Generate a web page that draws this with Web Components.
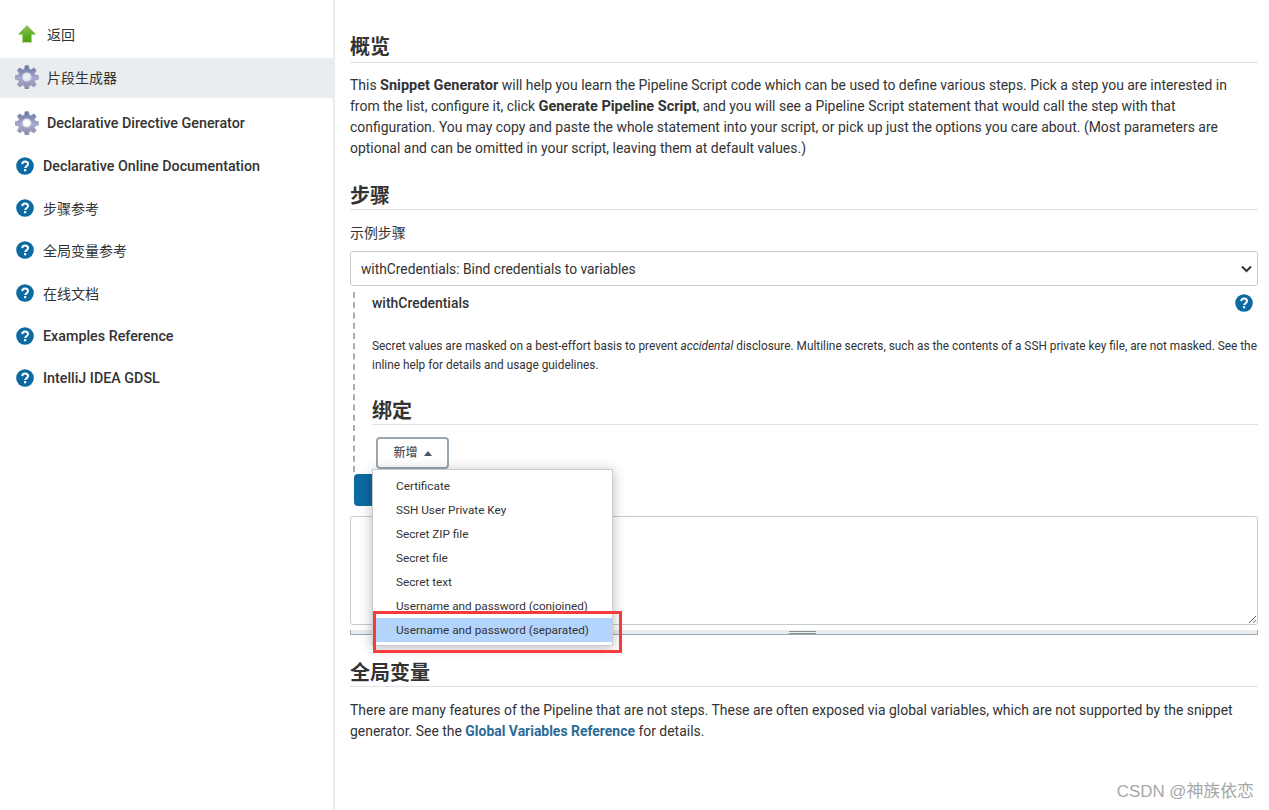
<!DOCTYPE html>
<html lang="zh">
<head>
<meta charset="utf-8">
<title>Snippet Generator</title>
<style>
html, body { margin: 0; height: 100%; background: #fff; overflow: hidden; }
body { font-family: Roboto, "Noto Sans CJK SC", sans-serif; color: #333; }
</style>
</head>
<body>
<snippet-page></snippet-page>

<template id="help-icon-tpl">
  <style>
    :host { display: inline-flex; width: 18px; height: 18px; }
    svg { width: 100%; height: 100%; display: block; }
  </style>
  <svg viewBox="0 0 18 18">
    <circle cx="9" cy="9" r="8.8" fill="#0b6aa2"/>
    <path d="M6.2 7.1C6.3 5.4 7.5 4.4 9.1 4.4c1.7 0 2.9 1 2.9 2.5 0 1.1-.6 1.8-1.6 2.4-.8.5-1.1.9-1.1 1.7" fill="none" stroke="#fff" stroke-width="2"/>
    <rect x="8" y="12.1" width="2.2" height="2.2" fill="#fff"/>
  </svg>
</template>

<script>
class HelpIcon extends HTMLElement {
    constructor() {
        super();
        this.attachShadow({ mode: "open" }).appendChild(document.getElementById("help-icon-tpl").content.cloneNode(true));
    }
}

class GearIcon extends HTMLElement {
    constructor() {
        super();
        this.attachShadow({ mode: "open" }).innerHTML = `
        <style>
        :host { display: inline-flex; width: 24px; height: 24px; }
        svg { width: 100%; height: 100%; display: block; }
        </style>
        <svg viewBox="0 0 24 24">
            <defs>
                <linearGradient id="g" x1="0" y1="0" x2="0" y2="1">
                    <stop offset="0" stop-color="#62769f"/>
                    <stop offset=".55" stop-color="#a9a9cf"/>
                    <stop offset="1" stop-color="#8b8ba6"/>
                </linearGradient>
            </defs>
            <path fill="url(#g)" stroke="#8f95ac" stroke-width=".5" fill-rule="evenodd" d="M10 .6h3.600l.6 3.400 1.900.8 2.800-2 2.500 2.500-2 2.900.8 1.800 3.300.6v3.700l-3.300.6-.8 1.800 2 2.900-2.500 2.500-2.800-2-1.900.8-.6 3.200h-3.600l-.6-3.200-1.900-.8-2.800 2-2.500-2.500 2-2.900-.8-1.800-3.300-.6V10.600l3.300-.6.8-1.800-2-2.900 2.500-2.500 2.800 2 1.900-.8zM11.800 8a4 4 0 1 0 .01 0z"/>
            <circle cx="11.800" cy="12" r="4" fill="none" stroke="#e8e8f4" stroke-width="1.200"/>
        </svg>`;
    }
}

class BackIcon extends HTMLElement {
    constructor() {
        super();
        this.attachShadow({ mode: "open" }).innerHTML = `
        <style>
        :host { display: inline-flex; width: 20px; height: 20px; }
        svg { width: 100%; height: 100%; display: block; }
        </style>
        <svg viewBox="0 0 20 20">
            <defs>
                <linearGradient id="a" x1="0" y1="0" x2="0" y2="1">
                    <stop offset="0" stop-color="#8fc463"/>
                    <stop offset=".6" stop-color="#5fae1f"/>
                    <stop offset="1" stop-color="#4f9e10"/>
                </linearGradient>
            </defs>
            <path fill="url(#a)" d="M10 1 19 10.500H14.500V18H5.500V10.500H1z"/>
            <rect x="5" y="18" width="10" height="1.200" fill="#c8d6bd"/>
        </svg>`;
    }
}

class SideItem extends HTMLElement {
    constructor() {
        super();
        this.attachShadow({ mode: "open" }).innerHTML = `
        <style>
        :host { display: flex; align-items: center; gap: var(--gap, 9px); height: var(--h, 42.5px); box-sizing: border-box; padding-left: var(--pad, 16px); padding-bottom: var(--up, 0); font-size: 14.300px; font-weight: 500; color: #333; }
        :host([active]) { background: #e9edf0; }
        :host([cjk]) { font-size: 14px; font-weight: 400; }
        ::slotted([slot=icon]) { flex: none; }
        </style>
        <slot name="icon"></slot>
        <span><slot></slot></span>`;
    }
}

class SideBar extends HTMLElement {
    constructor() {
        super();
        this.attachShadow({ mode: "open" }).innerHTML = `
        <style>
        :host { display: block; border-right: 2px solid #e9edf0; padding-top: 14px; box-sizing: border-box; height: 810px; }
        </style>
        <slot></slot>`;
    }
}

class SectionHeading extends HTMLElement {
    constructor() {
        super();
        this.attachShadow({ mode: "open" }).innerHTML = `
        <style>
        :host { display: block; font-size: 20px; line-height: 26px; font-weight: 700; color: #333; border-bottom: 1px solid #dfe3e6; }
        </style>
        <slot></slot>`;
    }
}

class StepSelect extends HTMLElement {
    constructor() {
        super();
        this.attachShadow({ mode: "open" }).innerHTML = `
        <style>
        :host { display: flex; align-items: center; justify-content: space-between; height: 35px; box-sizing: border-box; border: 1px solid #c8ccce; border-radius: 3px; padding: 1px 10px 0; font-size: 13.800px; color: #333; }
        svg { width: 11px; height: 8px; margin-right: -5px; }
        </style>
        <span><slot></slot></span>
        <svg viewBox="0 0 11 8"><path d="M1 1.500 5.500 6 10 1.500" fill="none" stroke="#333" stroke-width="2"/></svg>`;
    }
}

class DropMenu extends HTMLElement {
    constructor() {
        super();
        this.attachShadow({ mode: "open" }).innerHTML = `
        <style>
        :host { position: absolute; left: 372px; top: 469px; z-index: 2; display: block; width: 241px; box-sizing: border-box; padding: 4px 0 3px; background: #fff; border: 1px solid #c9cdd0; box-shadow: 0 2px 12px rgba(0,0,0,.28); font-size: 11.760px; color: #333; }
        </style>
        <slot></slot>`;
    }
}

class MenuItem extends HTMLElement {
    constructor() {
        super();
        this.attachShadow({ mode: "open" }).innerHTML = `
        <style>
        :host { display: block; height: 24px; line-height: 24px; padding-left: 23px; white-space: nowrap; }
        :host([selected]) { background: #b3d4fc; }
        </style>
        <slot></slot>`;
    }
}

class SnippetPage extends HTMLElement {
    constructor() {
        super();
        this.attachShadow({ mode: "open" }).innerHTML = `
        <style>
        :host { display: grid; grid-template-columns: 335px 1fr; height: 810px; position: relative; overflow: hidden; }
        main { padding: 34px 11px 0 15px; font-size: 13.950px; line-height: 21px; color: #333; min-width: 0; }
        p { margin: 0; }
        b { font-size: 14.500px; }
        .first { padding-bottom: 2px; }
        .intro { margin-top: 12px; }
        .steps { margin-top: 24px; }
        .label { margin-top: 13px; margin-bottom: 7px; }
        .step { margin: 6px 0 0 3px; border-left: 2px dashed #a9adb0; padding-left: 17px; height: 180px; }
        .step-head { display: flex; justify-content: space-between; align-items: center; font-weight: 500; padding-right: 5px; height: 22px; }
        .desc { margin-top: 23px; font-size: 11.850px; line-height: 19px; white-space: nowrap; }
        .bind { margin-top: 23px; }
        .add { margin: 12px 0 0 4px; padding-top: 1px; display: flex; align-items: center; justify-content: center; gap: 6px; box-sizing: border-box; width: 73px; height: 32px; border: 2px solid #9aa7b0; border-radius: 4px; font-size: 12px; font-weight: 500; color: #4d545d; }
        .add i { border: 4px solid transparent; border-bottom: 5px solid #4d545d; border-top: 0; }
        .run { margin: 2px 0 0 4px; display: block; width: 200px; height: 32px; border-radius: 4px; background: #0b6aa2; }
        textarea { display: block; width: 100%; height: 109px; margin-top: 10px; box-sizing: border-box; border: 1px solid #c8ccce; border-radius: 3px; background: #fff; outline: 0; padding: 0; }
        .handle { margin-top: 5px; height: 5px; background: #e9edf0; border: 1px solid #9aa7b0; border-width: 0 1px 1px; box-sizing: border-box; display: flex; justify-content: center; }
        .grip { width: 27px; height: 3px; margin-left: -3px; box-sizing: border-box; border-top: 1px solid #8a9490; border-bottom: 1px solid #8a9490; margin-top: 1px; }
        a { color: #2c6a95; font-weight: 700; text-decoration: none; }
        .global { margin-top: 25px; }
        .global-text { margin-top: 13px; }
        .red { position: absolute; z-index: 3; left: 373px; top: 611px; width: 249px; height: 42px; box-sizing: border-box; border: 3px solid #f53b3b; }
        .mark { position: absolute; z-index: 3; right: 15px; top: 781px; font: 16.900px/22px "Liberation Sans", "Noto Sans CJK SC", sans-serif; color: #a7a7a7; }
        </style>
        <side-bar>
            <side-item cjk style="--pad:17px;--gap:10px;--h:40px"><back-icon slot="icon"></back-icon>返回</side-item>
            <side-item cjk active style="--pad:15px;--gap:8px;--h:40px;--up:2px;margin-top:4px"><gear-icon slot="icon"></gear-icon>片段生成器</side-item>
            <side-item style="--pad:15px;--gap:8px;--h:46px;margin-top:2px"><gear-icon slot="icon"></gear-icon>Declarative Directive Generator</side-item>
            <side-item style="--h:40px"><help-icon slot="icon"></help-icon>Declarative Online Documentation</side-item>
            <side-item cjk style="margin-top:1px"><help-icon slot="icon"></help-icon>步骤参考</side-item>
            <side-item cjk style="--up:1px"><help-icon slot="icon"></help-icon>全局变量参考</side-item>
            <side-item cjk><help-icon slot="icon"></help-icon>在线文档</side-item>
            <side-item><help-icon slot="icon"></help-icon>Examples Reference</side-item>
            <side-item><help-icon slot="icon"></help-icon>IntelliJ IDEA GDSL</side-item>
        </side-bar>
        <main>
            <section-heading class="first">概览</section-heading>
            <p class="intro">This <b>Snippet Generator</b> will help you learn the Pipeline Script code which can be used to define various steps. Pick a step you are interested in from the list, configure it, click <b>Generate Pipeline Script</b>, and you will see a Pipeline Script statement that would call the step with that configuration. You may copy and paste the whole statement into your script, or pick up just the options you care about. (Most parameters are optional and can be omitted in your script, leaving them at default values.)</p>
            <section-heading class="steps">步骤</section-heading>
            <p class="label">示例步骤</p>
            <step-select>withCredentials: Bind credentials to variables</step-select>
            <div class="step">
                <div class="step-head"><span>withCredentials</span><help-icon></help-icon></div>
                <p class="desc">Secret values are masked on a best-effort basis to prevent <i>accidental</i> disclosure. Multiline secrets, such as the contents of a SSH private key file, are not masked. See the<br>inline help for details and usage guidelines.</p>
                <section-heading class="bind">绑定</section-heading>
                <div class="add">新增<i></i></div>
            </div>
            <div class="run"></div>
            <textarea></textarea>
            <div class="handle"><div class="grip"></div></div>
            <section-heading class="global">全局变量</section-heading>
            <p class="global-text">There are many features of the Pipeline that are not steps. These are often exposed via global variables, which are not supported by the snippet generator. See the <a>Global Variables Reference</a> for details.</p>
        </main>
        <drop-menu>
            <menu-item>Certificate</menu-item>
            <menu-item>SSH User Private Key</menu-item>
            <menu-item>Secret ZIP file</menu-item>
            <menu-item>Secret file</menu-item>
            <menu-item>Secret text</menu-item>
            <menu-item>Username and password (conjoined)</menu-item>
            <menu-item selected>Username and password (separated)</menu-item>
        </drop-menu>
        <div class="red"></div>
        <div class="mark">CSDN @神族依恋</div>`;
    }
}

customElements.define("help-icon", HelpIcon);
customElements.define("gear-icon", GearIcon);
customElements.define("back-icon", BackIcon);
customElements.define("side-item", SideItem);
customElements.define("side-bar", SideBar);
customElements.define("section-heading", SectionHeading);
customElements.define("step-select", StepSelect);
customElements.define("drop-menu", DropMenu);
customElements.define("menu-item", MenuItem);
customElements.define("snippet-page", SnippetPage);
</script>
</body>
</html>
